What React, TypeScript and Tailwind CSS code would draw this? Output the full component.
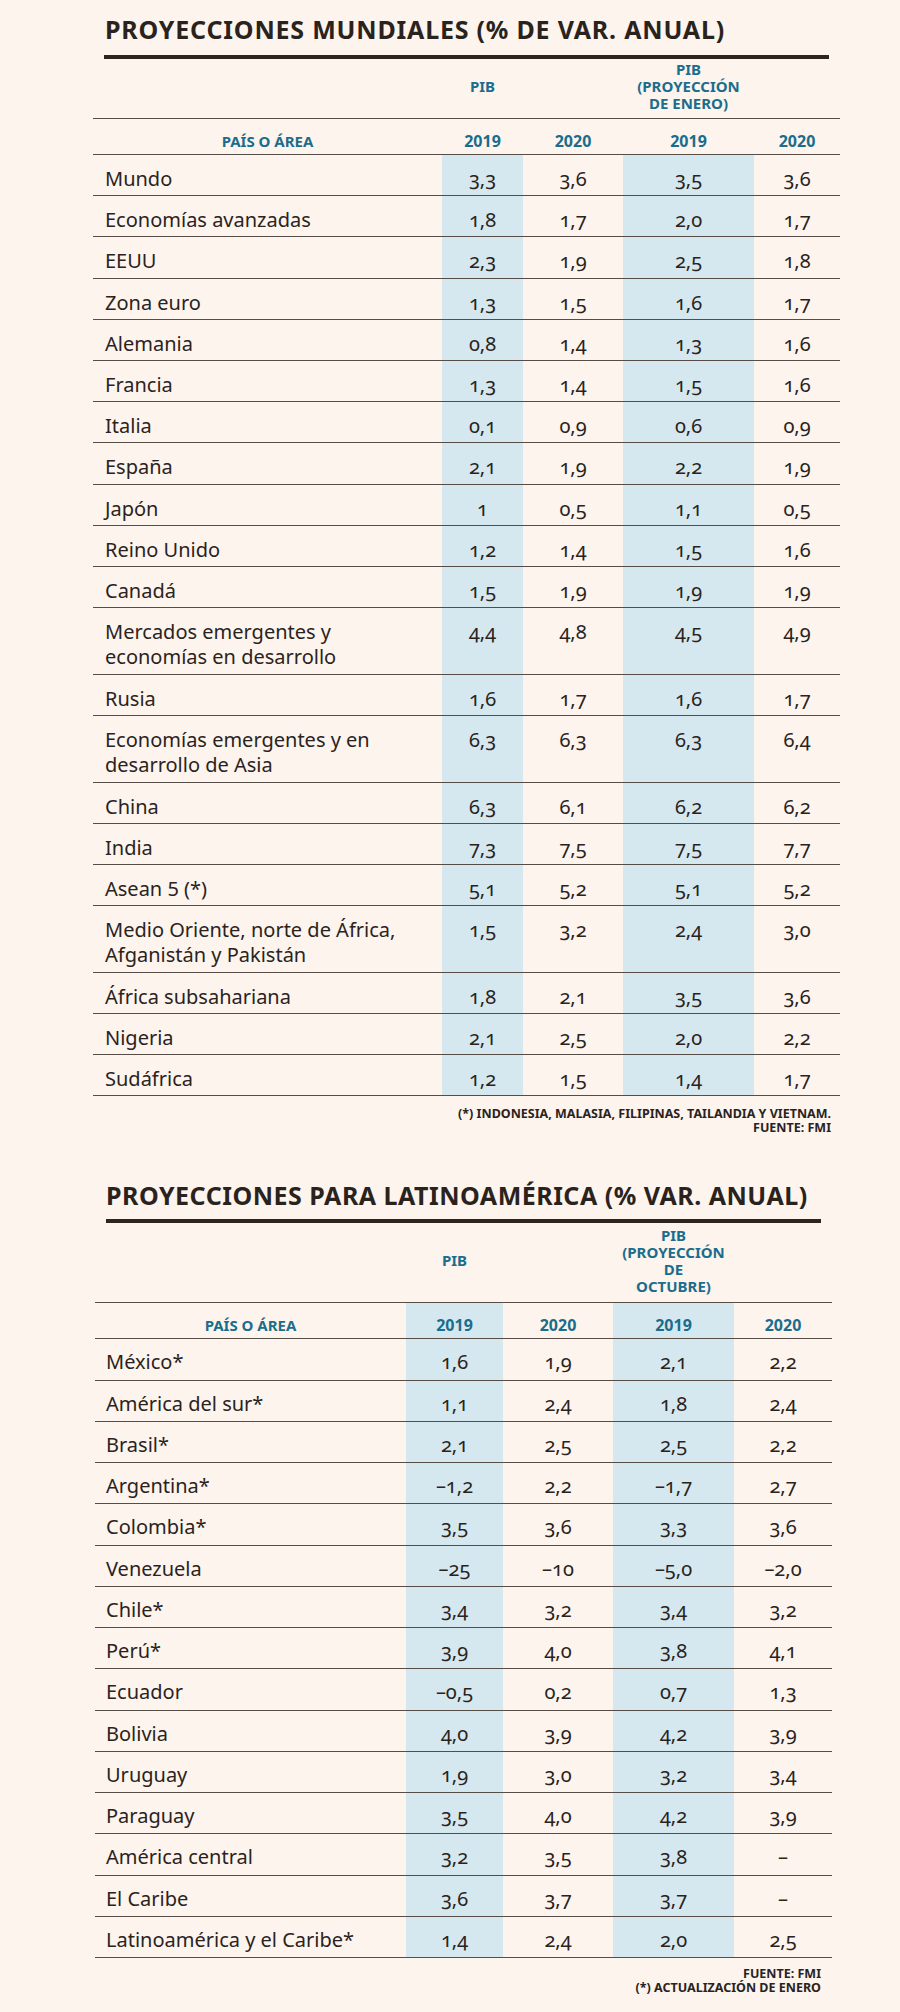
import React from "react";

type RowData = [string, string, string, string, string];

const T1: RowData[] = [
  ["Mundo", "3,3", "3,6", "3,5", "3,6"],
  ["Economías avanzadas", "1,8", "1,7", "2,0", "1,7"],
  ["EEUU", "2,3", "1,9", "2,5", "1,8"],
  ["Zona euro", "1,3", "1,5", "1,6", "1,7"],
  ["Alemania", "0,8", "1,4", "1,3", "1,6"],
  ["Francia", "1,3", "1,4", "1,5", "1,6"],
  ["Italia", "0,1", "0,9", "0,6", "0,9"],
  ["España", "2,1", "1,9", "2,2", "1,9"],
  ["Japón", "1", "0,5", "1,1", "0,5"],
  ["Reino Unido", "1,2", "1,4", "1,5", "1,6"],
  ["Canadá", "1,5", "1,9", "1,9", "1,9"],
  ["Mercados emergentes y|economías en desarrollo", "4,4", "4,8", "4,5", "4,9"],
  ["Rusia", "1,6", "1,7", "1,6", "1,7"],
  ["Economías emergentes y en|desarrollo de Asia", "6,3", "6,3", "6,3", "6,4"],
  ["China", "6,3", "6,1", "6,2", "6,2"],
  ["India", "7,3", "7,5", "7,5", "7,7"],
  ["Asean 5 (*)", "5,1", "5,2", "5,1", "5,2"],
  ["Medio Oriente, norte de África,|Afganistán y Pakistán", "1,5", "3,2", "2,4", "3,0"],
  ["África subsahariana", "1,8", "2,1", "3,5", "3,6"],
  ["Nigeria", "2,1", "2,5", "2,0", "2,2"],
  ["Sudáfrica", "1,2", "1,5", "1,4", "1,7"],
];

const T2: RowData[] = [
  ["México*", "1,6", "1,9", "2,1", "2,2"],
  ["América del sur*", "1,1", "2,4", "1,8", "2,4"],
  ["Brasil*", "2,1", "2,5", "2,5", "2,2"],
  ["Argentina*", "–1,2", "2,2", "–1,7", "2,7"],
  ["Colombia*", "3,5", "3,6", "3,3", "3,6"],
  ["Venezuela", "–25", "–10", "–5,0", "–2,0"],
  ["Chile*", "3,4", "3,2", "3,4", "3,2"],
  ["Perú*", "3,9", "4,0", "3,8", "4,1"],
  ["Ecuador", "–0,5", "0,2", "0,7", "1,3"],
  ["Bolivia", "4,0", "3,9", "4,2", "3,9"],
  ["Uruguay", "1,9", "3,0", "3,2", "3,4"],
  ["Paraguay", "3,5", "4,0", "4,2", "3,9"],
  ["América central", "3,2", "3,5", "3,8", "–"],
  ["El Caribe", "3,6", "3,7", "3,7", "–"],
  ["Latinoamérica y el Caribe*", "1,4", "2,4", "2,0", "2,5"],
];

function Label({ text }: { text: string }) {
  const parts = text.split("|");
  return (
    <>
      {parts.map((p, i) => (
        <React.Fragment key={i}>
          {i > 0 && <br />}
          {p}
        </React.Fragment>
      ))}
    </>
  );
}

function Table1() {
  const grid = "grid grid-cols-[349px_81px_100px_131px_86px]";
  return (
    <div className="ml-[93px] w-[747px]">
      <div
        className={`${grid} h-[59px] items-center pb-[4px] text-center text-[15px] font-bold leading-[17px] text-[#1a6d8c]`}
      >
        <div />
        <div>PIB</div>
        <div />
        <div>
          PIB
          <br />
          (PROYECCIÓN
          <br />
          DE ENERO)
        </div>
        <div />
      </div>
      <div
        className={`${grid} h-[37px] border-y border-[#554d46] text-center font-bold leading-[20px] text-[#1a6d8c]`}
      >
        <div className="pt-[12px] text-[15px]">PAÍS O ÁREA</div>
        <div className="pt-[12px] text-[16px]">2019</div>
        <div className="pt-[12px] text-[16px]">2020</div>
        <div className="pt-[12px] text-[16px]">2019</div>
        <div className="pt-[12px] text-[16px]">2020</div>
      </div>
      {T1.map((r) => {
        const dbl = r[0].includes("|");
        return (
          <div
            key={r[0]}
            className={`${grid} border-b border-[#554d46] text-[20px] leading-[25px] text-[#2a231d] ${
              dbl ? "h-[66.7px]" : "h-[41.2px]"
            }`}
          >
            <div className="pl-[12px] pt-[11px]">
              <Label text={r[0]} />
            </div>
            <div className="bg-[#d6e8ef] pt-[11px] text-center oldstyle-nums">{r[1]}</div>
            <div className="pt-[11px] text-center oldstyle-nums">{r[2]}</div>
            <div className="bg-[#d6e8ef] pt-[11px] text-center oldstyle-nums">{r[3]}</div>
            <div className="pt-[11px] text-center oldstyle-nums">{r[4]}</div>
          </div>
        );
      })}
      <div className="mt-[11px] pr-[9px] text-right text-[12.5px] font-bold leading-[13.5px] text-[#2a231d]">
        (*) INDONESIA, MALASIA, FILIPINAS, TAILANDIA Y VIETNAM.
        <br />
        FUENTE: FMI
      </div>
    </div>
  );
}

function Table2() {
  const grid = "grid grid-cols-[311px_97px_110px_121px_98px]";
  return (
    <div className="ml-[95px] w-[737px]">
      <div
        className={`${grid} h-[79px] items-center pb-[4px] text-center text-[15px] font-bold leading-[17px] text-[#1a6d8c]`}
      >
        <div />
        <div>PIB</div>
        <div />
        <div>
          PIB
          <br />
          (PROYECCIÓN
          <br />
          DE
          <br />
          OCTUBRE)
        </div>
        <div />
      </div>
      <div
        className={`${grid} h-[37px] border-y border-[#554d46] text-center font-bold leading-[20px] text-[#1a6d8c]`}
      >
        <div className="pt-[12px] text-[15px]">PAÍS O ÁREA</div>
        <div className="bg-[#d6e8ef] pt-[12px] text-[16px]">2019</div>
        <div className="pt-[12px] text-[16px]">2020</div>
        <div className="bg-[#d6e8ef] pt-[12px] text-[16px]">2019</div>
        <div className="pt-[12px] text-[16px]">2020</div>
      </div>
      {T2.map((r) => (
        <div
          key={r[0]}
          className={`${grid} h-[41.25px] border-b border-[#554d46] text-[20px] leading-[25px] text-[#2a231d]`}
        >
          <div className="pl-[11px] pt-[10px]">{r[0]}</div>
          <div className="bg-[#d6e8ef] pt-[10px] text-center oldstyle-nums">{r[1]}</div>
          <div className="pt-[10px] text-center oldstyle-nums">{r[2]}</div>
          <div className="bg-[#d6e8ef] pt-[10px] text-center oldstyle-nums">{r[3]}</div>
          <div className="pt-[10px] text-center oldstyle-nums">{r[4]}</div>
        </div>
      ))}
      <div className="mt-[9px] pr-[11px] text-right text-[12.5px] font-bold leading-[13.5px] text-[#2a231d]">
        FUENTE: FMI
        <br />
        (*) ACTUALIZACIÓN DE ENERO
      </div>
    </div>
  );
}

export default function App() {
  return (
    <div className="min-h-[2012px] w-[900px] bg-[#fdf4ed] pt-[14px] font-['Noto_Sans','Open_Sans',sans-serif] text-[#2a231d]">
      <div className="ml-[104px] w-[725px]">
        <h1 className="whitespace-nowrap pl-[1px] text-[25px] font-bold leading-[30px] tracking-[0.8px] text-[#2a231d]">
          PROYECCIONES MUNDIALES (% DE VAR. ANUAL)
        </h1>
        <div className="mt-[11px] h-[4px] bg-[#2e261e]" />
      </div>
      <Table1 />
      <div className="ml-[106px] mt-[46px] w-[715px]">
        <h1 className="whitespace-nowrap text-[25px] font-bold leading-[30px] tracking-[0.5px] text-[#2a231d]">
          PROYECCIONES PARA LATINOAMÉRICA (% VAR. ANUAL)
        </h1>
        <div className="mt-[9px] h-[4px] bg-[#2e261e]" />
      </div>
      <Table2 />
    </div>
  );
}
